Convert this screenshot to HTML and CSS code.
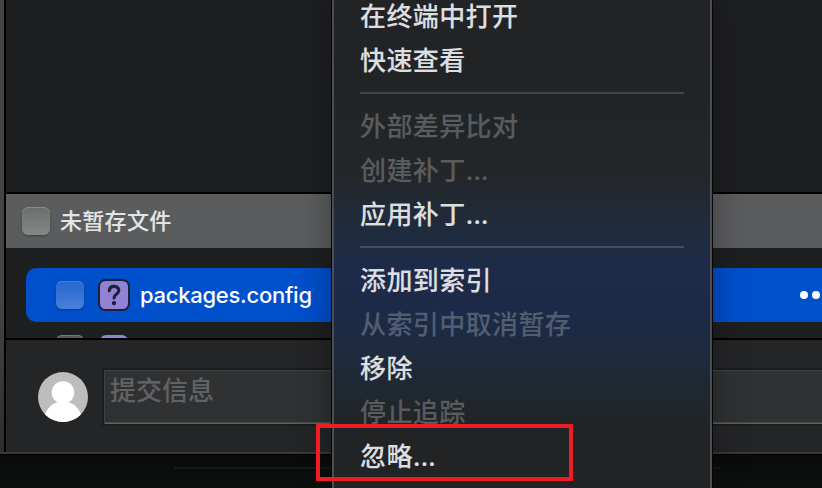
FILE: index.html
```html
<!DOCTYPE html>
<html lang="zh-CN">
<head>
<meta charset="utf-8">
<title>packages.config</title>
<link rel="stylesheet" href="styles.css">
</head>
<body>
<div class="desktop">
  <div class="window">
    <div class="edge"></div>
    <main class="pane">
      <section class="diff"></section>
      <header class="group"><span class="check"></span><span class="group-title">未暂存文件</span></header>
      <section class="files">
        <div class="file selected">
          <span class="check blue"></span>
          <svg class="badge" viewBox="0 0 32 32"><rect x="1" y="1" width="30" height="30" rx="6.5" fill="#9182d6" stroke="#1d2136" stroke-width="2"/><path d="M11.3 11.8C11.4 8.8 13.3 7.4 16 7.4c2.8 0 4.8 1.6 4.8 4.2 0 3.8-4.8 3.6-4.8 7.4" fill="none" stroke="#1d2136" stroke-width="3.1" stroke-linecap="round"/><circle cx="16" cy="24.1" r="2.2" fill="#1d2136"/></svg>
          <span class="name">packages.config</span>
          <span class="more"><i></i><i></i><i></i></span>
        </div>
        <div class="file next">
          <span class="check"></span>
          <span class="badge-peek"></span>
        </div>
      </section>
      <footer class="commit">
        <svg class="avatar" viewBox="0 0 50 50"><defs><clipPath id="disc"><circle cx="25" cy="25" r="25"/></clipPath></defs><g clip-path="url(#disc)"><rect width="50" height="50" fill="#bdbdbd"/><ellipse cx="25" cy="47" rx="18.5" ry="17.5" fill="#fff"/><circle cx="25" cy="20.5" r="11.3" fill="#fff"/></g></svg>
        <div class="message">提交信息</div>
      </footer>
    </main>
  </div>
  <div class="below"><div class="rule"></div></div>
</div>
<nav class="menu">
  <div class="item">在终端中打开</div>
  <div class="item">快速查看</div>
  <div class="separator"></div>
  <div class="item off">外部差异比对</div>
  <div class="item off">创建补丁<span class="dots">...</span></div>
  <div class="item">应用补丁<span class="dots">...</span></div>
  <div class="separator"></div>
  <div class="item">添加到索引</div>
  <div class="item off tinted">从索引中取消暂存</div>
  <div class="item">移除</div>
  <div class="item off">停止追踪</div>
  <div class="item">忽略<span class="dots">...</span></div>
</nav>
<div class="highlight"></div>
</body>
</html>
```
FILE: styles.css
```css
* { box-sizing: border-box; }
body {
  margin: 0;
  width: 822px;
  height: 488px;
  overflow: hidden;
  position: relative;
  background: #0c0d0d;
  font-family: Inter, "Noto Sans CJK SC", sans-serif;
  font-weight: 500;
}
.desktop { display: flex; flex-direction: column; height: 488px; }
.window {
  display: flex;
  height: 454px;
  border-bottom: 2px solid #373839;
}
.edge {
  width: 6px;
  flex: none;
  border-right: 2px solid #000;
  background: linear-gradient(#454547, #454547 65%, #2c2d2f);
}
.pane { flex: 1; min-width: 0; display: flex; flex-direction: column; background: #1e1f21; }
.diff { height: 194px; border-bottom: 2px solid #000; }
.group {
  height: 54px;
  display: flex;
  align-items: center;
  gap: 10px;
  padding-left: 16px;
  background: #5b5c5e;
}
.group-title {
  color: #e4e4e4;
  font-size: 22px;
  letter-spacing: .3px;
  line-height: 54px;
  -webkit-text-stroke: .12px;
}
.check {
  width: 28px;
  height: 28px;
  flex: none;
  border-radius: 6px;
  background: linear-gradient(#6c6d6d, #868787);
  box-shadow: inset 0 1px #8a8a8a, 0 1px 2px rgba(0, 0, 0, .35);
}
.check.blue {
  background: linear-gradient(#2466d0, #4a80da);
  box-shadow: inset 0 1px #4b80dc, 0 1px 2px rgba(0, 0, 0, .3);
}
.files {
  height: 92px;
  padding: 20px 0 0 20px;
  overflow: hidden;
  border-bottom: 2px solid #000;
}
.file { height: 54px; display: flex; align-items: center; padding-left: 30px; }
.selected { background: #004fcb; border-radius: 10px 0 0 10px; }
.badge { width: 32px; height: 32px; margin-left: 14px; }
.name { color: #fff; font-size: 22px; letter-spacing: -.26px; margin-left: 10px; line-height: 54px; }
.more { display: flex; gap: 4px; margin-left: auto; margin-right: -10px; }
.more i { width: 8px; height: 8px; border-radius: 50%; background: #fff; }
.next { align-items: flex-start; padding-top: 13px; }
.next .check { background: #555656; box-shadow: inset 0 1px #777; }
.badge-peek { width: 28px; height: 28px; margin-left: 16px; border-radius: 6px; background: #9182d6; }
.commit {
  height: 112px;
  display: flex;
  align-items: flex-start;
  padding: 28px 0 0 32px;
  background: #242527;
}
.avatar { width: 50px; height: 50px; flex: none; margin-top: 4px; }
.message {
  flex: 1;
  height: 58px;
  margin-left: 14px;
  padding-left: 6px;
  border: 2px solid #1b1c1d;
  border-right: 0;
  box-shadow: inset 1px 1px #404142, inset 0 -1px #606162, inset 0 -2px #484949;
  background: #303133;
  color: #616264;
  font-size: 26px;
  line-height: 42px;
  -webkit-text-stroke: .12px;
}
.below { flex: 1; border-top: 1px solid #000; background: linear-gradient(#090b0b, #0e1010); }
.rule { width: 546px; height: 2px; margin: 12px 0 0 174px; background: #171818; }
.menu {
  position: absolute;
  top: -7px;
  left: 332px;
  width: 380px;
  height: 504px;
  border: 2px solid #4b4d50;
  padding: 0 26px;
  background: linear-gradient(#222324 0, #212426 90px, #24272a 180px, #202b3b 230px, #1d2b48 270px, #1c2a49 320px, #1e2a3c 365px, #20272d 405px, #212324 440px, #222324 100%);
  box-shadow: 0 0 0 1px #050505, 0 0 32px rgba(0, 0, 0, .35);
}
.item {
  height: 44px;
  line-height: 44px;
  font-size: 26px;
  letter-spacing: .4px;
  white-space: nowrap;
  color: #dddee0;
  -webkit-text-stroke: .12px;
}
.item.off { color: #595b5d; }
.item.tinted { color: #525d70; }
.dots { letter-spacing: -.3px; }
.separator { height: 2px; margin: 9px 0 11px; background: rgba(255, 255, 255, .16); }
.highlight {
  position: absolute;
  left: 316px;
  top: 424px;
  width: 257px;
  height: 57px;
  border: 4px solid #ee1c25;
}
```
